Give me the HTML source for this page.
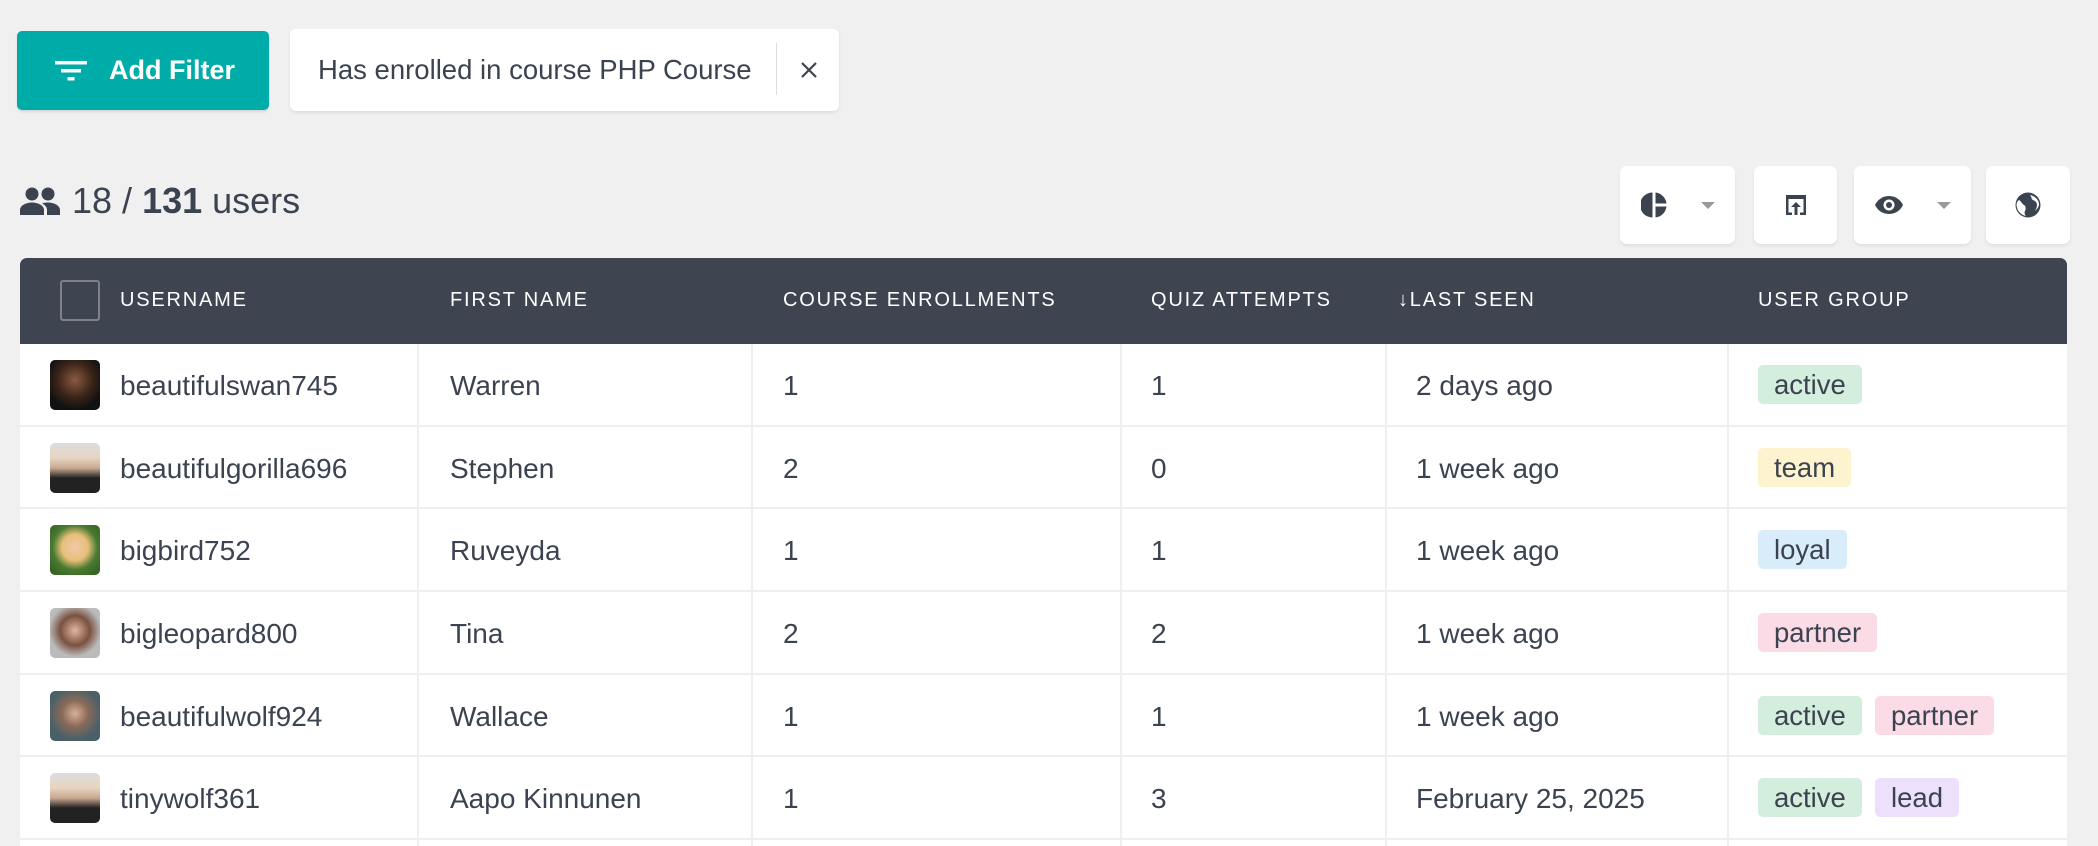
<!DOCTYPE html>
<html style="width:2098px;height:846px;overflow:hidden"><head><meta charset="utf-8"><style>
*{box-sizing:border-box;margin:0;padding:0}
body{width:2098px;height:846px;background:#f0f0f0;font-family:"Liberation Sans",Arial,sans-serif;color:#3c4350;position:relative;overflow:hidden}
.abs{position:absolute}
.btn{left:17px;top:31px;width:252px;height:79px;background:#00aca8;border-radius:5px;color:#fff;font-weight:bold;font-size:27px;display:flex;align-items:center;padding-left:38px;box-shadow:0 2px 2px rgba(0,0,0,.1)}
.chip{left:290px;top:29px;width:549px;height:82px;background:#fff;border-radius:6px;box-shadow:0 2px 3px rgba(0,0,0,.08);font-size:27.5px;display:flex;align-items:center;padding-left:28px}
.chip .div{position:absolute;left:486px;top:14px;width:1px;height:52px;background:#ddd}
.tb{top:166px;height:78px;background:#fff;border-radius:7px;box-shadow:0 2px 3px rgba(0,0,0,.07);display:flex;align-items:center;justify-content:center}
.caret{width:0;height:0;border-left:7px solid transparent;border-right:7px solid transparent;border-top:7px solid #999;margin-left:34px}
.table{left:20px;top:258px;width:2047px;height:588px;background:#fff;border-radius:7px 7px 0 0;overflow:hidden}
.head{height:86px;background:#3e4450;color:#fff;font-size:20px;letter-spacing:1.8px;position:relative}
.head span{position:absolute;top:31px}
.row{height:82.7px;border-bottom:2px solid #efefef;position:relative;font-size:28px}
.row>span{position:absolute;top:26px}
.vl{position:absolute;top:344px;width:2px;height:502px;background:#efefef}
.av{position:absolute;left:30px;top:16px;width:50px;height:50px;border-radius:5px}
.b{position:absolute;top:21px;height:39px;border-radius:5px;padding:0 16px;line-height:39px;font-size:27.5px}
.ac{background:#d3eedd}.te{background:#fdf3cf}.lo{background:#d9ecfa}.pa{background:#fadbe6}.le{background:#ece0fc}
</style></head><body>
<div class="abs btn"><svg width="32" height="22" viewBox="0 0 32 22" style="margin-right:22px"><rect x="0" y="1" width="32" height="3.5" fill="#fff"/><rect x="6" y="9" width="20" height="3.5" fill="#fff"/><rect x="12.5" y="17" width="7" height="3.5" fill="#fff"/></svg>Add Filter</div>
<div class="abs chip">Has enrolled in course PHP Course<div class="div"></div><svg class="abs" style="left:510px;top:32px" width="18" height="18" viewBox="0 0 18 18"><path d="M2 2L16 16M16 2L2 16" stroke="#3c4350" stroke-width="2.2"/></svg></div>
<svg class="abs" style="left:20px;top:187px" width="40" height="28" viewBox="0 0 40 28"><circle cx="12" cy="7" r="6.5" fill="#3c4350"/><circle cx="28" cy="7" r="6.5" fill="#3c4350"/><path d="M0 28V23C0 18 7 15.5 12 15.5S24 18 24 23V28Z" fill="#3c4350"/><path d="M22 16.5C24 15.8 26 15.5 28 15.5C33 15.5 40 18 40 23V28H27V23C27 20 25 18 22 16.5Z" fill="#3c4350"/></svg>
<div class="abs" style="left:72px;top:180px;font-size:36px">18 / <b>131</b> users</div>
<div class="abs tb" style="left:1620px;width:115px"><svg width="26" height="26" viewBox="0 0 26 26"><path d="M11.5 0.5A12.5 12.5 0 0 0 11.5 25.5Z" fill="#3c4350"/><path d="M14.5 0.5A12.5 12.5 0 0 1 25.5 11.5H14.5Z" fill="#3c4350"/><path d="M14.5 14.5H25.5A12.5 12.5 0 0 1 14.5 25.5Z" fill="#3c4350"/></svg><div class="caret"></div></div>
<div class="abs tb" style="left:1754px;width:83px"><svg width="24" height="22" viewBox="0 0 24 22"><path d="M2 1H22V21H16V18.5H19.5V5H4.5V18.5H8V21H2Z" fill="#3c4350"/><path d="M12 8L7 13H10.5V21H13.5V13H17Z" fill="#3c4350"/></svg></div>
<div class="abs tb" style="left:1854px;width:117px"><svg width="28" height="18" viewBox="0 0 28 18"><path d="M14 0C7 0 2 4.5 0 9C2 13.5 7 18 14 18S26 13.5 28 9C26 4.5 21 0 14 0Z" fill="#3c4350"/><circle cx="14" cy="9" r="5.5" fill="#fff"/><circle cx="14" cy="9" r="3" fill="#3c4350"/></svg><div class="caret"></div></div>
<div class="abs tb" style="left:1986px;width:84px"><svg width="26" height="26" viewBox="0 0 26 26"><circle cx="13" cy="13" r="12.5" fill="#3c4350"/><path d="M4 8C6 9 7 12 9 13C11 14 11 17 10 19C9 21 10 23 11 24C6 23 2 19 1.5 13C1.5 11 2.5 9 4 8Z" fill="#fff"/><path d="M15 3C17 5 16 7 18 8C20 9 22 10 22 13C22 15 21 17 20 19C22 17 24 15 24 12C24 8 20 4 15 3Z" fill="#fff"/></svg></div>
<div class="abs table">
<div class="head"><div style="position:absolute;left:40px;top:22px;width:40px;height:41px;border:2px solid #7d828a;border-radius:3px"></div>
<span style="left:100px">USERNAME</span><span style="left:430px">FIRST NAME</span><span style="left:763px">COURSE ENROLLMENTS</span><span style="left:1131px">QUIZ ATTEMPTS</span><span style="left:1378px">↓LAST SEEN</span><span style="left:1738px">USER GROUP</span></div>
<div class="row"><div class="av" style="background:radial-gradient(circle at 50% 40%,#8a5a40 0,#3a2418 45%,#111 75%)"></div><span style="left:100px">beautifulswan745</span><span style="left:430px">Warren</span><span style="left:763px">1</span><span style="left:1131px">1</span><span style="left:1396px">2 days ago</span><div class="b ac" style="left:1738px">active</div></div>
<div class="row"><div class="av" style="background:linear-gradient(#ddd 0,#e8d4c0 30%,#c8a890 50%,#222 70%,#222 100%)"></div><span style="left:100px">beautifulgorilla696</span><span style="left:430px">Stephen</span><span style="left:763px">2</span><span style="left:1131px">0</span><span style="left:1396px">1 week ago</span><div class="b te" style="left:1738px">team</div></div>
<div class="row"><div class="av" style="background:radial-gradient(circle at 50% 45%,#f0c8a8 0,#e8c07a 35%,#4a7a30 60%,#2f5a20 100%)"></div><span style="left:100px">bigbird752</span><span style="left:430px">Ruveyda</span><span style="left:763px">1</span><span style="left:1131px">1</span><span style="left:1396px">1 week ago</span><div class="b lo" style="left:1738px">loyal</div></div>
<div class="row"><div class="av" style="background:radial-gradient(circle at 50% 45%,#e0b8a0 0,#7a5040 40%,#bbb 70%)"></div><span style="left:100px">bigleopard800</span><span style="left:430px">Tina</span><span style="left:763px">2</span><span style="left:1131px">2</span><span style="left:1396px">1 week ago</span><div class="b pa" style="left:1738px">partner</div></div>
<div class="row"><div class="av" style="background:radial-gradient(circle at 50% 45%,#d8b098 0,#8a6a58 35%,#4a6068 70%)"></div><span style="left:100px">beautifulwolf924</span><span style="left:430px">Wallace</span><span style="left:763px">1</span><span style="left:1131px">1</span><span style="left:1396px">1 week ago</span><div class="b ac" style="left:1738px">active</div><div class="b pa" style="left:1855px">partner</div></div>
<div class="row"><div class="av" style="background:linear-gradient(#ddd 0,#e8d4c0 30%,#c8a890 50%,#222 70%,#222 100%)"></div><span style="left:100px">tinywolf361</span><span style="left:430px">Aapo Kinnunen</span><span style="left:763px">1</span><span style="left:1131px">3</span><span style="left:1396px">February 25, 2025</span><div class="b ac" style="left:1738px">active</div><div class="b le" style="left:1855px">lead</div></div>
</div>
<div class="vl" style="left:417px"></div><div class="vl" style="left:751px"></div><div class="vl" style="left:1120px"></div><div class="vl" style="left:1385px"></div><div class="vl" style="left:1727px"></div>
</body></html>
